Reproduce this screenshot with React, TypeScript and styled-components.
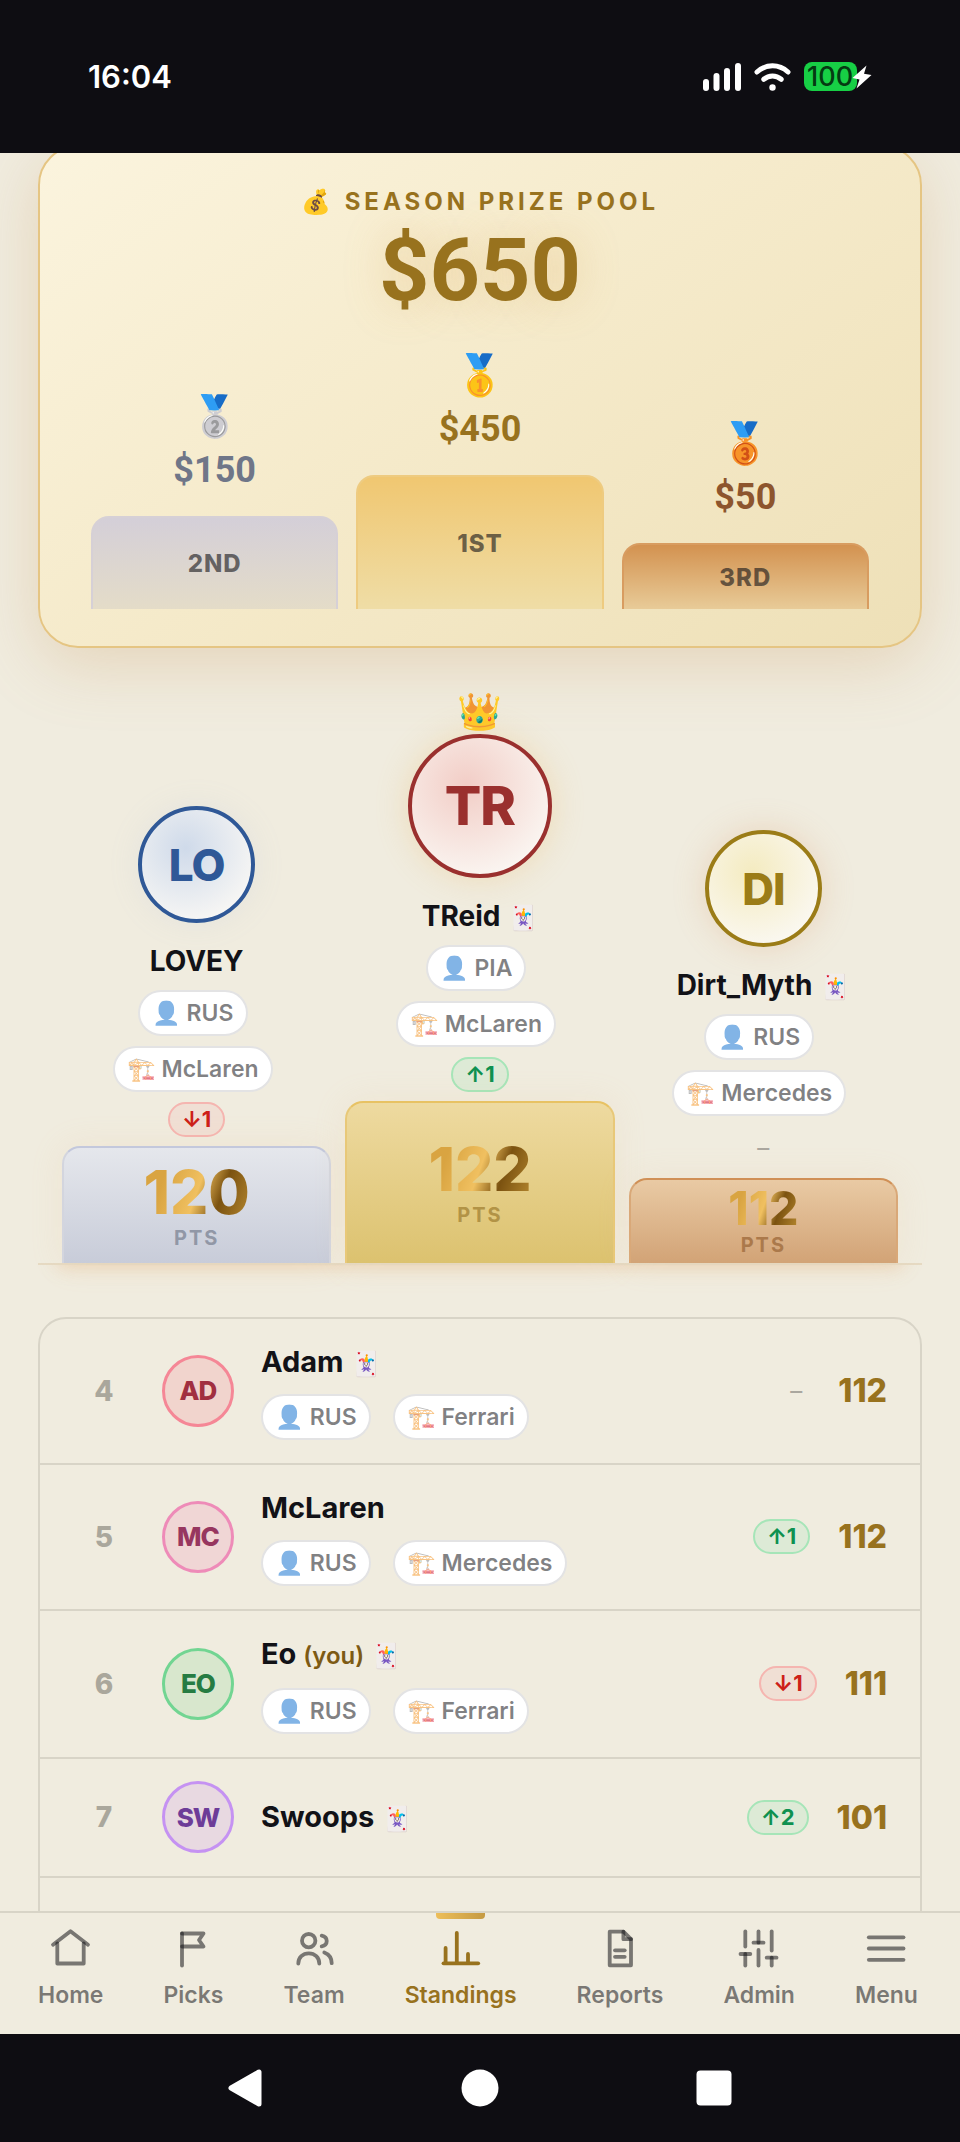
import React from "react";
import styled, { createGlobalStyle } from "styled-components";

const GlobalStyle = createGlobalStyle`
  *, *::before, *::after { box-sizing: border-box; }
  body {
    margin: 0;
    background: #0e0d12;
    color: #121217;
    font-family: Inter, "Liberation Sans", sans-serif;
  }
  h1, h2, p, ol, ul { margin: 0; padding: 0; list-style: none; }
`;

const Screen = styled.div`
  display: flex;
  flex-direction: column;
  height: 100vh;
`;

/* ---------- device bars ---------- */

const StatusBar = styled.header`
  display: flex;
  flex: none;
  align-items: center;
  justify-content: space-between;
  height: 153px;
  padding: 0 88px;
  background: #0e0d12;
  color: #fff;
`;

const Clock = styled.time`
  font-size: 31px;
  line-height: 36px;
  font-weight: 600;
`;

const StatusIcons = styled.div`
  display: flex;
  align-items: center;
  gap: 13px;
`;

const Battery = styled.div`
  display: flex;
  align-items: center;
`;

const BatteryLevel = styled.span`
  width: 53px;
  height: 29px;
  padding-left: 3px;
  border-radius: 8px;
  background: #17cf45;
  color: #053a12;
  font-size: 27px;
  line-height: 29px;
  font-weight: 500;
`;

const Bolt = styled.svg`
  margin-left: -5px;
`;

const SystemBar = styled.footer`
  display: flex;
  flex: none;
  align-items: center;
  justify-content: center;
  gap: 194px;
  height: 108px;
  background: #0e0d12;
`;

const SystemButton = styled.button`
  display: flex;
  padding: 0;
  border: 0;
  background: none;
`;

/* ---------- scrolling page ---------- */

const Main = styled.main`
  flex: 1;
  min-height: 0;
  overflow-y: auto;
  scrollbar-width: none;
  padding: 0 38px;
  background: #f0ecdf;
`;

const PrizeCard = styled.section`
  margin-top: -8px;
  padding: 40px 51px 37px;
  border: 2px solid #e5c583;
  border-radius: 40px;
  background: linear-gradient(145deg, #fbf4de 0%, #f5eaca 50%, #eee0b7 100%);
  box-shadow: 0 16px 64px rgba(200, 150, 90, 0.28);
  text-align: center;
`;

const PrizeTitle = styled.h2`
  color: #98721e;
  font-size: 24px;
  line-height: 30px;
  font-weight: 700;
  letter-spacing: 4px;
`;

const PrizeTotal = styled.p`
  color: #98721e;
  font-family: Roboto, sans-serif;
  font-size: 88px;
  line-height: 106px;
  font-weight: 700;
  text-shadow: 0 0 40px rgba(220, 165, 80, 0.35);
`;

const PrizeSteps = styled.ol`
  display: grid;
  grid-template-columns: repeat(3, 1fr);
  align-items: end;
  gap: 18px;
  margin-top: 28px;
`;

type Place = "first" | "second" | "third";

const prizeInk: Record<Place, string> = {
  first: "#98721e",
  second: "#6f7688",
  third: "#8d552d",
};
const prizeFill: Record<Place, string> = {
  first: "linear-gradient(#f0c771, #efdda6)",
  second: "linear-gradient(#d4cfd8, #e4dcc8)",
  third: "linear-gradient(#d39250, #e8cb98)",
};
const prizeEdge: Record<Place, string> = {
  first: "#eecb80",
  second: "#d6d0d6",
  third: "#d89c60",
};
const prizeHeight: Record<Place, number> = { first: 134, second: 93, third: 66 };

const Medal = styled.div`
  font-size: 40px;
  line-height: 48px;
`;

const PrizeAmount = styled.div<{ $place: Place }>`
  margin: 9px 0 25px;
  color: ${(p) => prizeInk[p.$place]};
  font-family: Roboto, sans-serif;
  font-size: 36px;
  line-height: 42px;
  font-weight: 700;
`;

const PrizeStep = styled.div<{ $place: Place }>`
  display: flex;
  align-items: center;
  justify-content: center;
  height: ${(p) => prizeHeight[p.$place]}px;
  border: 2px solid ${(p) => prizeEdge[p.$place]};
  border-bottom: 0;
  border-radius: 18px 18px 0 0;
  background: ${(p) => prizeFill[p.$place]};
  color: rgba(18, 18, 23, 0.6);
  font-size: 24px;
  font-weight: 800;
  letter-spacing: 1px;
`;

/* ---------- podium ---------- */

const Podium = styled.ol`
  display: grid;
  grid-template-columns: repeat(3, minmax(0, 1fr));
  align-items: end;
  gap: 14px;
  margin-top: 40px;
  padding: 0 24px;
  border-bottom: 2px solid #e6dac3;
  box-shadow: 0 22px 16px -20px rgba(230, 170, 110, 0.35);
`;

const PodiumColumn = styled.li`
  display: flex;
  flex-direction: column;
  align-items: center;
`;

const Crown = styled.div`
  font-size: 36px;
  line-height: 46px;
`;

const PodiumAvatar = styled.div<{ $ink: string; $tint: string; $glow: string; $large?: boolean }>`
  display: flex;
  align-items: center;
  justify-content: center;
  width: ${(p) => (p.$large ? 144 : 117)}px;
  height: ${(p) => (p.$large ? 144 : 117)}px;
  border: 4px solid ${(p) => p.$ink};
  border-radius: 50%;
  background: radial-gradient(circle at 40% 35%, ${(p) => p.$tint}, #fbf9f5 85%);
  box-shadow: 0 0 32px ${(p) => p.$glow};
  color: ${(p) => p.$ink};
  font-size: ${(p) => (p.$large ? 54 : 44)}px;
  line-height: 1;
  font-weight: 800;
  letter-spacing: -1px;
`;

const Name = styled.p`
  font-size: 29px;
  line-height: 36px;
  font-weight: 700;
  white-space: nowrap;
`;

const PodiumName = styled(Name)`
  margin: 20px 0 11px;
  font-size: 28px;
`;

const Joker = styled.span`
  margin-left: 1px;
  font-size: 24px;
  font-weight: 400;
  line-height: 1;
`;

const You = styled.span`
  color: #7d5a14;
  font-size: 24px;
  font-weight: 600;
`;

const Pill = styled.span`
  height: 46px;
  padding: 0 12px;
  border: 2px solid #e3e3e4;
  border-radius: 23px;
  background: #fff;
  color: rgba(18, 18, 23, 0.54);
  font-size: 23px;
  line-height: 42px;
  font-weight: 600;
  white-space: nowrap;
`;

const PodiumPicks = styled.div`
  display: flex;
  flex-direction: column;
  align-items: center;
  gap: 10px;
  margin: 0 8px 10px 0;
`;

const Change = styled.span<{ $up: boolean }>`
  height: 35px;
  padding: 0 12px;
  border: 2px solid ${(p) => (p.$up ? "#a6e5b8" : "#f5b5b0")};
  border-radius: 18px;
  background: ${(p) => (p.$up ? "#ddead6" : "#f0dfd4")};
  color: ${(p) => (p.$up ? "#0e9150" : "#cd2018")};
  font-size: 22px;
  line-height: 31px;
  font-weight: 700;
`;

const NoChange = styled.span`
  padding: 0 8px;
  color: #aaa79f;
  font-size: 24px;
  line-height: 43px;
`;

const stepTop: Record<Place, string> = { first: "#e8c263", second: "#c3c8dc", third: "#d09056" };
const stepSide: Record<Place, string> = { first: "#e8c878", second: "#d3d5de", third: "#d9a878" };
const stepFill: Record<Place, string> = {
  first: "linear-gradient(#eedaa0, #dcc26f)",
  second: "linear-gradient(#e5e7ec, #c8ccd9)",
  third: "linear-gradient(#e9caa4, #d2a376)",
};
const stepHeight: Record<Place, number> = { first: 162, second: 117, third: 85 };

const PodiumStep = styled.div<{ $place: Place }>`
  display: flex;
  flex-direction: column;
  align-items: center;
  justify-content: center;
  align-self: stretch;
  height: ${(p) => stepHeight[p.$place]}px;
  margin-top: 9px;
  border: 2px solid ${(p) => stepSide[p.$place]};
  border-top-color: ${(p) => stepTop[p.$place]};
  border-bottom: 0;
  border-radius: 18px 18px 0 0;
  background: ${(p) => stepFill[p.$place]};
  box-shadow: 0 0 32px rgba(235, 190, 140, 0.16);
`;

const Score = styled.strong<{ $small: boolean }>`
  background: linear-gradient(110deg, #d9a441 0%, #d9a441 20%, #f0c060 50%, #7b5210 70%, #b88a30 100%);
  background-clip: text;
  color: transparent;
  font-size: ${(p) => (p.$small ? 46 : 60)}px;
  line-height: ${(p) => (p.$small ? 46 : 64)}px;
  font-weight: 800;
`;

const ScoreUnit = styled.span<{ $place: Place }>`
  color: ${(p) => ({ first: "#b29346", second: "#9197a6", third: "#ab794b" })[p.$place]};
  font-size: 20px;
  line-height: 28px;
  font-weight: 700;
  letter-spacing: 2px;
`;

/* ---------- standings ---------- */

const Standings = styled.ol`
  margin-top: 52px;
  border: 2px solid #d8d4c7;
  border-radius: 28px 28px 0 0;
`;

const StandingRow = styled.li`
  display: flex;
  align-items: center;
  padding: 22px 33px 23px 32px;
  border-bottom: 2px solid #d8d4c7;
`;

const Rank = styled.span`
  width: 64px;
  color: #aaa79c;
  font-size: 28px;
  font-weight: 800;
  text-align: center;
`;

const RowAvatar = styled.span<{ $ink: string; $edge: string; $fill: string }>`
  display: flex;
  flex: none;
  align-items: center;
  justify-content: center;
  width: 72px;
  height: 72px;
  margin: 0 27px 0 26px;
  border: 3px solid ${(p) => p.$edge};
  border-radius: 50%;
  background: ${(p) => p.$fill};
  color: ${(p) => p.$ink};
  font-size: 26px;
  font-weight: 800;
  letter-spacing: -1px;
`;

const Entry = styled.div`
  flex: 1;
  min-width: 0;
`;

const EntryPicks = styled.div`
  display: flex;
  gap: 22px;
  margin-top: 14px;
`;

const EntryWithPicks = styled(Entry)`
  padding-top: 3px;
`;

const Total = styled.strong`
  margin-left: 28px;
  color: #98721e;
  font-size: 32px;
  font-weight: 800;
`;

/* The entry that starts just above the tab bar: its name is indented to the name column. */
const NextRow = styled.li`
  height: 146px;
  padding: 28px 33px 0 221px;
`;

/* ---------- tab bar ---------- */

const TabBar = styled.nav`
  display: flex;
  flex: none;
  align-items: flex-start;
  justify-content: space-between;
  height: 123px;
  padding: 0 42px 0 38px;
  border-top: 2px solid #d8d4c7;
  background: #f0ecdf;
`;

const Tab = styled.a<{ $active?: boolean }>`
  position: relative;
  display: flex;
  flex-direction: column;
  align-items: center;
  gap: 10px;
  padding-top: 13px;
  color: ${(p) => (p.$active ? "#98721e" : "rgba(18, 18, 23, 0.54)")};
  font-size: 23px;
  line-height: 30px;
  font-weight: 600;
  text-decoration: none;
`;

const ActiveMark = styled.span`
  position: absolute;
  top: 0;
  left: 50%;
  width: 49px;
  height: 6px;
  margin-left: -25px;
  border-radius: 0 0 4px 4px;
  background: linear-gradient(90deg, #edbe59, #c59a43);
`;

const TabIcon = styled.svg`
  width: 44px;
  height: 44px;
  fill: none;
  stroke: currentColor;
  stroke-width: 3.8;
  stroke-linecap: round;
  stroke-linejoin: round;
`;

/* ---------- data ---------- */

const prizes: { place: Place; medal: string; amount: string; label: string }[] = [
  { place: "second", medal: "🥈", amount: "$150", label: "2ND" },
  { place: "first", medal: "🥇", amount: "$450", label: "1ST" },
  { place: "third", medal: "🥉", amount: "$50", label: "3RD" },
];

const leaders = [
  { place: "second" as Place, name: "LOVEY", joker: false, driver: "RUS", team: "McLaren", change: -1, points: 120, ink: "#2f5897", tint: "#cfdaea", glow: "rgba(150,170,210,.12)" },
  { place: "first" as Place, name: "TReid", joker: true, driver: "PIA", team: "McLaren", change: 1, points: 122, ink: "#9a302e", tint: "#f2cdc6", glow: "rgba(235,180,90,.3)" },
  { place: "third" as Place, name: "Dirt_Myth", joker: true, driver: "RUS", team: "Mercedes", change: 0, points: 112, ink: "#9b7c17", tint: "#f4ebc0", glow: "rgba(220,150,100,.28)" },
];

const entries = [
  { rank: 4, name: "Adam", joker: true, driver: "RUS", team: "Ferrari", change: 0, points: 112, ink: "#a12f40", edge: "#f58796", fill: "#f1d4cd" },
  { rank: 5, name: "McLaren", joker: false, driver: "RUS", team: "Mercedes", change: 1, points: 112, ink: "#97365f", edge: "#ee8bb8", fill: "#f0d6d5" },
  { rank: 6, name: "Eo", you: true, joker: true, driver: "RUS", team: "Ferrari", change: -1, points: 111, ink: "#267c42", edge: "#72d592", fill: "#d8e7cd" },
  { rank: 7, name: "Swoops", joker: true, change: 2, points: 101, ink: "#6d3c98", edge: "#c592f2", fill: "#e8d9e1" },
];

const tabs = [
  { label: "Home", parts: ["M4 18.7 21.5 5.3 39 18.7", "M8.3 17.3V37.5H34.7V17.3"] },
  { label: "Picks", parts: ["M11 7.5V39.5", "M11 7.5H32.5L28 14 32.5 20.5H11"] },
  {
    label: "Team",
    parts: [
      "M10 14.7a6.7 6.7 0 1 0 13.4 0a6.7 6.7 0 1 0 -13.4 0",
      "M6.3 37.6C6.3 31.5 10.8 27.3 16.8 27.3S27.3 31.5 27.3 37.6",
      "M29.7 9.7C36.4 11 36.4 19 29.7 20.3",
      "M32.3 26.4C37 28.2 39.7 32 39.7 37.2",
    ],
  },
  { label: "Standings", active: true, parts: ["M4.5 37.3H39.2", "M6.6 22V37", "M17.8 7V37", "M29 28V37"] },
  { label: "Reports", parts: ["M11.7 5.7H25.4L33 13.2V39.3H11.7Z", "M25.4 5.7V13.2H33", "M17 24.3H26.7", "M17 30.8H26.7"] },
  {
    label: "Admin",
    parts: ["M8.3 5.4V20.6", "M8.3 28V39.5", "M3.5 28H13.3", "M21.5 5.4V16.7", "M21.5 24V39.5", "M16.5 16.7H26.5", "M34.7 5.4V24.5", "M34.7 31.7V39.5", "M29.7 31.7H39.5"],
  },
  { label: "Menu", parts: ["M4.8 11.3H39.5", "M4.8 22.5H39.5", "M4.8 33.8H39.5"] },
] as { label: string; active?: boolean; parts: string[] }[];

function ChangeMark({ value }: { value: number }) {
  if (value === 0) return <NoChange>–</NoChange>;
  return <Change $up={value > 0}>{`${value > 0 ? "↑" : "↓"}${Math.abs(value)}`}</Change>;
}

export default function App() {
  return (
    <>
      <GlobalStyle />
      <Screen>
        <StatusBar>
          <Clock>16:04</Clock>
          <StatusIcons>
            <svg width="38" height="28" viewBox="0 0 38 28" fill="#fff">
              <rect x="0" y="16" width="6" height="12" rx="3" />
              <rect x="10.5" y="10" width="6" height="18" rx="3" />
              <rect x="21" y="5" width="6" height="23" rx="3" />
              <rect x="32" y="0" width="6" height="28" rx="3" />
            </svg>
            <svg width="37" height="28" viewBox="0 0 37 28" fill="none" stroke="#fff" strokeLinecap="round">
              <path d="M3 9C12 .8 25 .8 34 9" strokeWidth="5" />
              <path d="M9.8 16.3C15 12 22 12 27.2 16.3" strokeWidth="5" />
              <circle cx="18.5" cy="24.5" r="3.2" fill="#fff" stroke="none" />
            </svg>
            <Battery>
              <BatteryLevel>100</BatteryLevel>
              <Bolt width="20" height="24" viewBox="0 0 20 24">
                <path d="M14.5 .5 .5 13 7.5 14.5 4.5 23.5 19.5 10 12 8.8Z" fill="#fff" />
              </Bolt>
            </Battery>
          </StatusIcons>
        </StatusBar>

        <Main>
          <PrizeCard>
            <PrizeTitle>💰 SEASON PRIZE POOL</PrizeTitle>
            <PrizeTotal>$650</PrizeTotal>
            <PrizeSteps>
              {prizes.map((p) => (
                <li key={p.place}>
                  <Medal>{p.medal}</Medal>
                  <PrizeAmount $place={p.place}>{p.amount}</PrizeAmount>
                  <PrizeStep $place={p.place}>{p.label}</PrizeStep>
                </li>
              ))}
            </PrizeSteps>
          </PrizeCard>

          <Podium>
            {leaders.map((l) => (
              <PodiumColumn key={l.name}>
                {l.place === "first" && <Crown>👑</Crown>}
                <PodiumAvatar $ink={l.ink} $tint={l.tint} $glow={l.glow} $large={l.place === "first"}>
                  {l.name.slice(0, 2).toUpperCase()}
                </PodiumAvatar>
                <PodiumName>
                  {l.name} {l.joker && <Joker>🃏</Joker>}
                </PodiumName>
                <PodiumPicks>
                  <Pill>👤 {l.driver}</Pill>
                  <Pill>🏗️ {l.team}</Pill>
                </PodiumPicks>
                <ChangeMark value={l.change} />
                <PodiumStep $place={l.place}>
                  <Score $small={l.place === "third"}>{l.points}</Score>
                  <ScoreUnit $place={l.place}>PTS</ScoreUnit>
                </PodiumStep>
              </PodiumColumn>
            ))}
          </Podium>

          <Standings>
            {entries.map((e) => {
              const name = (
                <Name>
                  {e.name} {e.you && <You>(you) </You>}
                  {e.joker && <Joker>🃏</Joker>}
                </Name>
              );
              return (
                <StandingRow key={e.rank}>
                  <Rank>{e.rank}</Rank>
                  <RowAvatar $ink={e.ink} $edge={e.edge} $fill={e.fill}>
                    {e.name.slice(0, 2).toUpperCase()}
                  </RowAvatar>
                  {e.driver ? (
                    <EntryWithPicks>
                      {name}
                      <EntryPicks>
                        <Pill>👤 {e.driver}</Pill>
                        <Pill>🏗️ {e.team}</Pill>
                      </EntryPicks>
                    </EntryWithPicks>
                  ) : (
                    <Entry>{name}</Entry>
                  )}
                  <ChangeMark value={e.change} />
                  <Total>{e.points}</Total>
                </StandingRow>
              );
            })}
            <NextRow>
              <Name>
                Craig <Joker>🃏</Joker>
              </Name>
            </NextRow>
          </Standings>
        </Main>

        <TabBar>
          {tabs.map((t) => (
            <Tab key={t.label} href="#" $active={t.active}>
              {t.active && <ActiveMark />}
              <TabIcon viewBox="0 0 44 44">
                {t.parts.map((d) => (
                  <path key={d} d={d} />
                ))}
              </TabIcon>
              {t.label}
            </Tab>
          ))}
        </TabBar>

        <SystemBar>
          <SystemButton aria-label="Back">
            <svg width="40" height="40" viewBox="0 0 40 40">
              <path d="M5 20 33 4V36Z" fill="#fff" stroke="#fff" strokeWidth="5" strokeLinejoin="round" />
            </svg>
          </SystemButton>
          <SystemButton aria-label="Home">
            <svg width="40" height="40" viewBox="0 0 40 40">
              <circle cx="20" cy="20" r="18.5" fill="#fff" />
            </svg>
          </SystemButton>
          <SystemButton aria-label="Recent apps">
            <svg width="40" height="40" viewBox="0 0 40 40">
              <rect x="2.5" y="2.5" width="35" height="35" rx="4" fill="#fff" />
            </svg>
          </SystemButton>
        </SystemBar>
      </Screen>
    </>
  );
}
